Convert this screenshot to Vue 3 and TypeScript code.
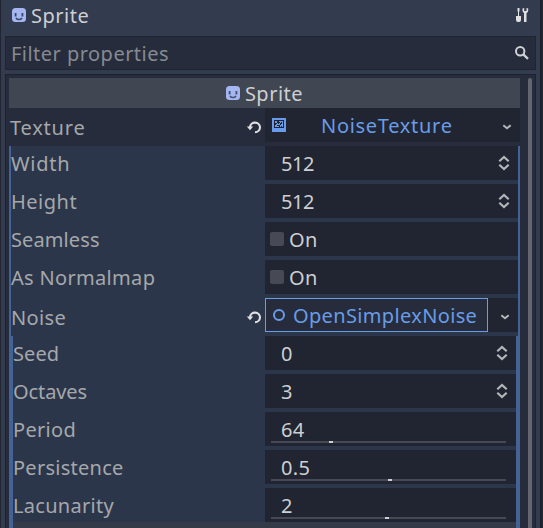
<script setup lang="ts">
interface Row {
  label: string
  kind: 'spin' | 'check' | 'slider'
  value: string
  tracking: number
  ratio?: number
}

const textureRows: Row[] = [
  { label: 'Width', kind: 'spin', value: '512', tracking: 0.75 },
  { label: 'Height', kind: 'spin', value: '512', tracking: 0.5 },
  { label: 'Seamless', kind: 'check', value: 'On', tracking: 0.1 },
  { label: 'As Normalmap', kind: 'check', value: 'On', tracking: 0.32 },
]

const noiseRows: Row[] = [
  { label: 'Seed', kind: 'spin', value: '0', tracking: 0.1 },
  { label: 'Octaves', kind: 'spin', value: '3', tracking: -0.1 },
  { label: 'Period', kind: 'slider', value: '64', ratio: 58, tracking: 0.3 },
  { label: 'Persistence', kind: 'slider', value: '0.5', ratio: 117, tracking: 0.27 },
  { label: 'Lacunarity', kind: 'slider', value: '2', ratio: 114, tracking: 0.3 },
]
</script>

<template>
  <div class="dock">
    <header class="title">
      <svg class="sprite" viewBox="0 0 16 16">
        <rect x="1" y="1" width="14" height="14" rx="3.5" fill="#a5b7f3" />
        <path d="M3.700 6h1.800v3.500H3.700zM10.500 6h1.800v3.500h-1.800z" fill="#3c4768" />
        <path d="M5 11c1.400 2.100 4.600 2.100 6 0" fill="none" stroke="#3c4768" stroke-width="1.500" />
      </svg>
      <span class="title-text">Sprite</span>
      <svg class="tools" viewBox="0 0 16 16">
        <path d="M2.500 1h2v3l-.5 1v4h2v4a2 2 0 0 1-2 2H3a2 2 0 0 1-2-2V9h2V5l-.5-1z" fill="#e0e0e0" />
        <path d="M7.500 1.500v2.200A3 3 0 0 0 9 6v9h2.500V6A3 3 0 0 0 13.200 3.700V1.500L11.500 1v3H9.200V1z" fill="#e0e0e0" />
      </svg>
    </header>

    <div class="filter">
      <span>Filter properties</span>
      <svg class="search" viewBox="0 0 16 16">
        <circle cx="6.200" cy="6.200" r="4.200" fill="none" stroke="#d0d1d4" stroke-width="2" />
        <path d="M9.300 9.300l4.700 4.500" stroke="#d0d1d4" stroke-width="2.300" />
      </svg>
    </div>

    <div class="panel">
      <div class="props">
        <div class="category">
          <svg class="sprite" viewBox="0 0 16 16">
            <rect x="1" y="1" width="14" height="14" rx="3.5" fill="#a5b7f3" />
            <path d="M3.700 6h1.800v3.500H3.700zM10.500 6h1.800v3.500h-1.800z" fill="#46506f" />
            <path d="M5 11c1.400 2.100 4.600 2.100 6 0" fill="none" stroke="#46506f" stroke-width="1.500" />
          </svg>
          <span>Sprite</span>
        </div>

        <div class="row texture">
          <span class="label">Texture</span>
          <svg class="revert" viewBox="0 0 16 16">
            <path d="M4 9V8a5 4.800 0 1 1 5 5.200" fill="none" stroke="#e0e0e0" stroke-width="2.100" />
            <path d="M.8 7.500h6.400L4 11.200z" fill="#e0e0e0" />
          </svg>
          <div class="field resource">
            <svg class="noise-tex" viewBox="0 0 14 14" shape-rendering="crispEdges">
              <rect width="14" height="14" rx="1" fill="#699ce8" />
              <path d="M2 2h10v8H2zM3 3v6h8V3z" fill="#202531" fill-rule="evenodd" />
              <path d="M5 3h2v1h1v1H7v1H6V5H5zM3 5h2v1H4v1H3zM5 7h2v1H5zM8 5h1V4h1v2H9v1H8zM7 7h1v2H7zM9 8h1v1H9z" fill="#202531" />
            </svg>
            <span class="res-name">NoiseTexture</span>
            <svg class="chev" viewBox="0 0 10 6">
              <path d="M1.300 1.200l3.700 3 3.700-3" fill="none" stroke="#b4b6ba" stroke-width="2" />
            </svg>
          </div>
        </div>

        <div class="group outer">
          <div v-for="r in textureRows" :key="r.label" class="row">
            <span class="label" :style="{ letterSpacing: r.tracking + 'px' }">{{ r.label }}</span>
            <div class="field" :class="r.kind">
              <i v-if="r.kind === 'check'" class="box"></i>
              <span>{{ r.value }}</span>
              <svg v-if="r.kind === 'spin'" class="updown" viewBox="0 0 12 16">
                <path d="M1.300 6.200L6 2l4.700 4.200M1.300 9.800L6 14l4.700-4.200" fill="none" stroke="#b4b6ba" stroke-width="2.200" />
              </svg>
            </div>
          </div>

          <div class="row noise">
            <span class="label">Noise</span>
            <svg class="revert" viewBox="0 0 16 16">
              <path d="M4 9V8a5 4.800 0 1 1 5 5.200" fill="none" stroke="#e0e0e0" stroke-width="2.100" />
              <path d="M.8 7.500h6.400L4 11.200z" fill="#e0e0e0" />
            </svg>
            <div class="field">
              <div class="focused">
                <i class="ring"></i>
                <span>OpenSimplexNoise</span>
              </div>
              <svg class="chev" viewBox="0 0 10 6">
                <path d="M1.300 1.200l3.700 3 3.700-3" fill="none" stroke="#b4b6ba" stroke-width="2" />
              </svg>
            </div>
          </div>

          <div class="group inner">
            <div v-for="r in noiseRows" :key="r.label" class="row">
              <span class="label" :style="{ letterSpacing: r.tracking + 'px' }">{{ r.label }}</span>
              <div class="field" :class="r.kind">
                <span>{{ r.value }}</span>
                <svg v-if="r.kind === 'spin'" class="updown" viewBox="0 0 12 16">
                  <path d="M1.300 6.200L6 2l4.700 4.200M1.300 9.800L6 14l4.700-4.200" fill="none" stroke="#b4b6ba" stroke-width="2.200" />
                </svg>
                <div v-if="r.kind === 'slider'" class="track">
                  <i class="grab" :style="{ marginLeft: r.ratio + 'px' }"></i>
                </div>
              </div>
            </div>
            <div class="section"></div>
          </div>
        </div>
      </div>
      <div class="scroll"></div>
    </div>
  </div>
</template>

<style>
body {
  margin: 0;
  background: #202531;
  overflow: hidden;
}
</style>

<style scoped>
* {
  box-sizing: border-box;
}
svg {
  display: block;
  flex: none;
}
span {
  padding-top: 2px;
}
.dock {
  width: 541px;
  height: 528px;
  overflow: hidden;
  padding: 0 4px;
  display: flex;
  flex-direction: column;
  background: #333b4f;
  border-left: 1px solid #202531;
  border-right: 1px solid #1b1f2a;
  font: 20px/34px "Noto Sans", sans-serif;
  letter-spacing: 0.35px;
  color: #cdcfd2;
  white-space: nowrap;
}
.title {
  flex: none;
  height: 36px;
  display: flex;
  align-items: flex-start;
  padding: 7px 5px 0 6px;
}
.title-text {
  margin: -10px auto 0 4px;
  letter-spacing: 0.5px;
}
.sprite,
.tools,
.search,
.revert {
  width: 16px;
  height: 16px;
}
.filter {
  flex: none;
  height: 34px;
  width: 531px;
  display: flex;
  align-items: center;
  justify-content: space-between;
  padding: 0 5px;
  background: #262c3b;
  border: 1px solid #202531;
  color: #868a92;
  letter-spacing: 0.47px;
}
.panel {
  flex: none;
  width: 531px;
  height: 460px;
  margin-top: 4px;
  padding: 3px 3px 0;
  display: flex;
  gap: 8px;
  background: #262c3b;
  border: 1px solid #1d222e;
}
.props {
  width: 511px;
}
.scroll {
  width: 4px;
  border-radius: 2px 2px 0 0;
  background: #63666e;
}
.category {
  height: 30px;
  display: flex;
  align-items: center;
  justify-content: center;
  gap: 4px;
  padding-right: 1px;
  background: #414653;
  letter-spacing: 0.5px;
}
.row {
  height: 34px;
  display: flex;
  align-items: center;
}
.label {
  flex: 1;
  color: #a5a8ab;
}
.field {
  flex: none;
  height: 34px;
  width: 253px;
  display: flex;
  align-items: center;
  background: #202531;
}
.texture {
  margin-bottom: 4px;
}
.texture .field {
  width: 255px;
}
.texture .label,
.noise .label {
  padding-top: 6px;
}
.texture .label {
  padding-left: 1px;
  letter-spacing: 0.8px;
}
.revert {
  margin: 4px 3px 0 0;
}
.resource {
  color: #699ce8;
  padding: 0 8px 0 7px;
}
.noise-tex {
  width: 14px;
  height: 14px;
}
.res-name {
  flex: 1;
  padding-left: 35px;
  letter-spacing: 0.7px;
}
.chev {
  width: 10px;
  height: 6px;
  margin-top: 3px;
}
.group {
  display: flex;
  flex-direction: column;
  gap: 4px;
  background: #2c364a;
  border: 0 solid #446394;
}
.outer {
  border-width: 0 2px;
}
.inner {
  border-width: 0 2px;
}
.inner .field {
  width: 251px;
}
.spin {
  justify-content: space-between;
  padding: 0 8px 0 16px;
  letter-spacing: -0.4px;
}
.updown {
  width: 12px;
  height: 16px;
}
.check {
  padding-left: 5px;
  gap: 5px;
}
.box {
  width: 14px;
  height: 14px;
  border-radius: 2px;
  background: #474a54;
}
.focused {
  width: 223px;
  height: 34px;
  display: flex;
  align-items: center;
  gap: 8px;
  padding-left: 7px;
  margin-right: 12px;
  border: 1px solid #699ce8;
  background: #262c3b;
  color: #699ce8;
}
.ring {
  width: 12px;
  height: 12px;
  border: 2px solid #699ce8;
  border-radius: 50%;
}
.slider {
  flex-direction: column;
  align-items: flex-start;
  padding: 0 10px 0 6px;
}
.slider span {
  padding: 1px 0 0 10px;
  height: 29px;
}
.track {
  width: 235px;
  height: 2px;
  background: #474a54;
}
.grab {
  display: block;
  width: 4px;
  height: 2px;
  background: #cdcfd2;
}
.section {
  height: 10px;
  margin-top: -4px;
  background: #353a48;
}
</style>
